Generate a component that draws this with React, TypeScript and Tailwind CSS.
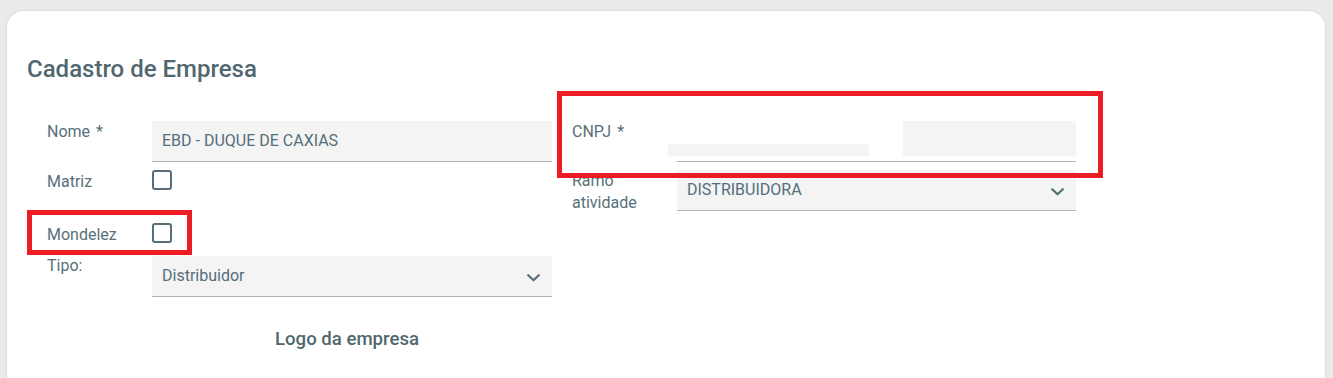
import React from "react";

const Chevron = () => (
  <svg width="13" height="8" viewBox="0 0 13 8" className="shrink-0 mt-[3px]">
    <polyline points="1.2,1.2 6.5,6.3 11.8,1.2" fill="none" stroke="#546e7a" strokeWidth="2.2" strokeLinecap="round" strokeLinejoin="round" />
  </svg>
);

const Checkbox = () => (
  <div className="w-5 h-5 border-2 border-[#546e7a] rounded-[3px] box-border" />
);

const Label = ({ children, className = "" }: { children: React.ReactNode; className?: string }) => (
  <div className={`w-[105px] shrink-0 text-[16px] leading-[22px] text-[#587079] ${className}`}>{children}</div>
);

export default function App() {
  return (
    <div
      className="h-[378px] overflow-hidden bg-[#eaeaea] pt-[11px] pl-[7px] pr-[8px]"
      style={{ fontFamily: "Roboto, 'Noto Sans', sans-serif" }}
    >
      <div className="relative bg-white rounded-[16px] h-[420px] pl-5 pt-[43px] shadow-[0_0_2px_rgba(0,0,0,0.18)]">
        <h1 className="text-[24px] leading-[30px] font-medium text-[#50676f]">Cadastro de Empresa</h1>

        <div className="flex gap-5 pl-5 mt-[37px]">
          {/* left column */}
          <div className="w-[505px] flex flex-col">
            <div className="flex items-start h-[41px]">
              <Label>Nome<span className="ml-[6px]">*</span></Label>
              <div className="w-[400px] h-[41px] bg-[#f4f4f4] border-b border-[#a9b5bb] px-[10px] flex items-center text-[16px] text-[#546e7a]">
                EBD - DUQUE DE CAXIAS
              </div>
            </div>
            <div className="flex items-start h-[53px] mt-[8px]">
              <Label className="pt-px">Matriz</Label>
              <Checkbox />
            </div>
            <div className="flex items-start h-[33px]">
              <Label className="pt-px">Mondelez</Label>
              <Checkbox />
            </div>
            <div className="flex items-start h-[41px]">
              <Label className="-mt-px">Tipo:</Label>
              <div className="w-[400px] h-[41px] bg-[#f4f4f4] border-b border-[#a9b5bb] pl-[10px] pr-[12px] flex items-center justify-between text-[16px] text-[#546e7a]">
                <span>Distribuidor</span>
                <Chevron />
              </div>
            </div>
            <div className="ml-[105px] w-[390px] mt-[30px] text-center text-[18.6px] leading-[24px] font-medium text-[#50676f]">
              Logo da empresa
            </div>
          </div>

          {/* right column */}
          <div className="w-[504px] flex flex-col">
            <div className="flex items-start h-[41px]">
              <Label>CNPJ<span className="ml-[6px]">*</span></Label>
              <div className="relative w-[399px] h-[41px] border-b border-[#a9b5bb]">
                <div className="absolute left-[226px] top-0 w-[173px] h-[35px] bg-[#f4f4f4]" />
                <div className="absolute left-[-9px] top-[23px] w-[201px] h-[12px] bg-[#f4f4f4]" />
              </div>
            </div>
            <div className="flex items-start h-[41px] mt-[8px]">
              <Label>Ramo atividade</Label>
              <div className="w-[399px] h-[41px] bg-[#f4f4f4] border-b border-[#a9b5bb] pl-[10px] pr-[12px] flex items-center justify-between text-[16px] text-[#546e7a]">
                <span>DISTRIBUIDORA</span>
                <Chevron />
              </div>
            </div>
          </div>
        </div>

        {/* highlight boxes */}
        <div className="absolute left-[20px] top-[199px] w-[165px] h-[45px] border-[5px] border-[#ed1c24]" />
        <div className="absolute left-[550px] top-[80px] w-[546px] h-[87px] border-[5px] border-[#ed1c24]" />
      </div>
    </div>
  );
}
